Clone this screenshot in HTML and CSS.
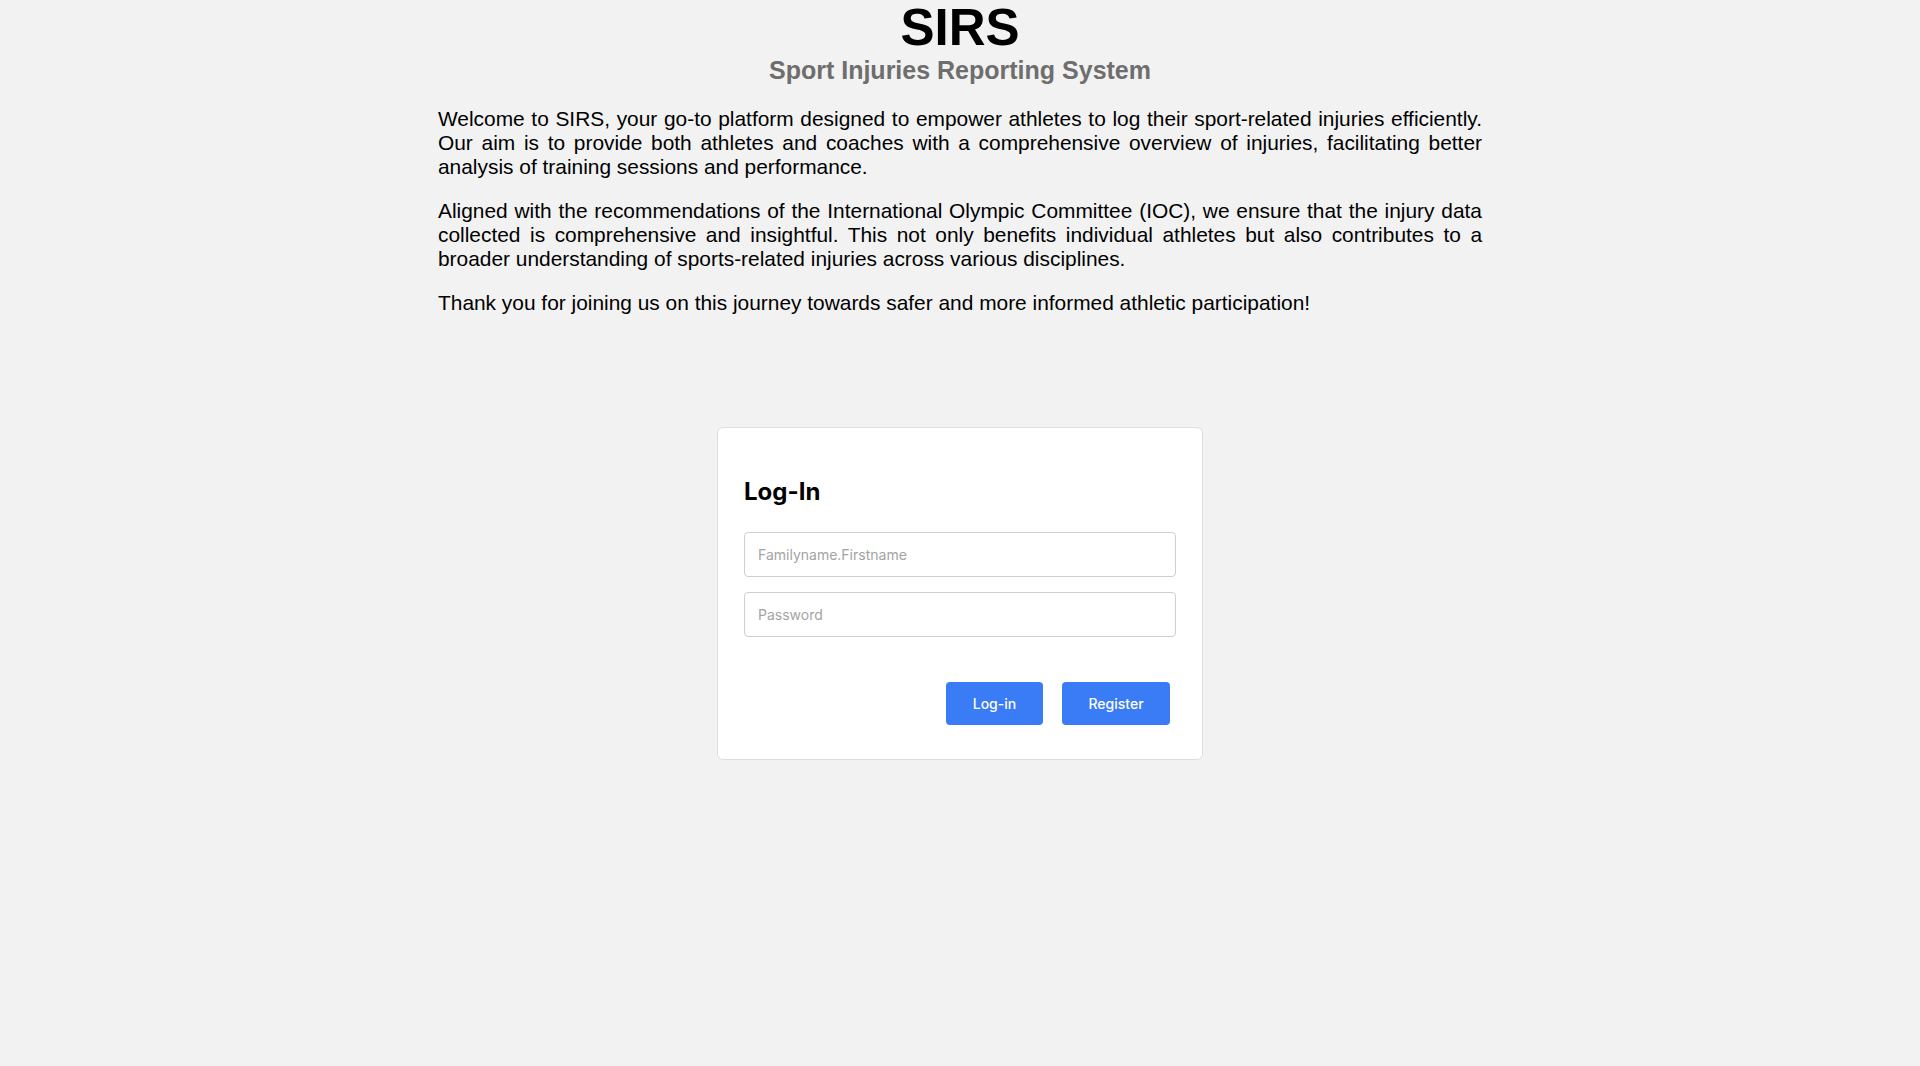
FILE: index.html
```html
<!DOCTYPE html>
<html lang="en">
<head>
<meta charset="utf-8">
<title>SIRS - Sport Injuries Reporting System</title>
<link rel="stylesheet" href="styles.css">
</head>
<body>
<main class="page">
  <header class="masthead">
    <h1 class="title">SIRS</h1>
    <h2 class="subtitle">Sport Injuries Reporting System</h2>
  </header>
  <section class="intro">
    <p>Welcome to SIRS, your go-to platform designed to empower athletes to log their sport-related injuries efficiently. Our aim is to provide both athletes and coaches with a comprehensive overview of injuries, facilitating better analysis of training sessions and performance.</p>
    <p>Aligned with the recommendations of the International Olympic Committee (IOC), we ensure that the injury data collected is comprehensive and insightful. This not only benefits individual athletes but also contributes to a broader understanding of sports-related injuries across various disciplines.</p>
    <p>Thank you for joining us on this journey towards safer and more informed athletic participation!</p>
  </section>
  <form class="card" onsubmit="return false">
    <h3 class="card-title">Log-In</h3>
    <input class="field" type="text" placeholder="Familyname.Firstname">
    <input class="field" type="password" placeholder="Password">
    <div class="actions">
      <button class="btn btn-login" type="submit">Log-in</button>
      <button class="btn btn-register" type="button">Register</button>
    </div>
  </form>
</main>
</body>
</html>
```

FILE: styles.css
```css
html, body {
  margin: 0;
  padding: 0;
  background: #f2f2f2;
}

.page {
  display: flex;
  flex-direction: column;
  align-items: center;
  font-family: "Liberation Sans", Arial, sans-serif;
  color: #000;
}

.masthead {
  display: flex;
  flex-direction: column;
  align-items: center;
}

.title {
  margin: 0;
  font-size: 51px;
  font-weight: 700;
  line-height: 55px;
}

.subtitle {
  margin: 1px 0 0 0;
  font-size: 25px;
  font-weight: 700;
  color: #6e6e6e;
  line-height: 28px;
}

.intro {
  width: 1044px;
  margin-top: 23px;
}

.intro p {
  margin: 0 0 20px 0;
  font-size: 20.9px;
  line-height: 24px;
  text-align: justify;
}

.intro p:last-child {
  margin-bottom: 0;
}

.card {
  box-sizing: border-box;
  width: 486px;
  margin-top: 112px;
  padding: 26px 26px 34px 26px;
  background: #fff;
  border: 1px solid #dedede;
  border-radius: 6px;
  display: flex;
  flex-direction: column;
  font-family: Inter, "Noto Sans", sans-serif;
}

.card-title {
  margin: 23px 0 26px 0;
  font-size: 24px;
  font-weight: 700;
  line-height: 29px;
  color: #000;
}

.field {
  box-sizing: border-box;
  width: 100%;
  height: 45px;
  margin: 0 0 15px 0;
  padding: 0 13px;
  border: 1px solid #cfcfcf;
  border-radius: 4px;
  background: #fff;
  font-family: Inter, "Noto Sans", sans-serif;
  font-size: 14px;
  color: #222;
  outline: none;
}

.field::placeholder {
  color: #a3a3a3;
}

.actions {
  display: flex;
  justify-content: flex-end;
  gap: 19px;
  margin-top: 30px;
  padding-right: 6px;
}

.btn {
  box-sizing: border-box;
  height: 43px;
  border: none;
  border-radius: 4px;
  background: #3a7cf6;
  color: #fff;
  font-family: Inter, "Noto Sans", sans-serif;
  font-size: 14px;
  font-weight: 500;
  cursor: pointer;
}

.btn-login {
  width: 97px;
}

.btn-register {
  width: 108px;
}
```
